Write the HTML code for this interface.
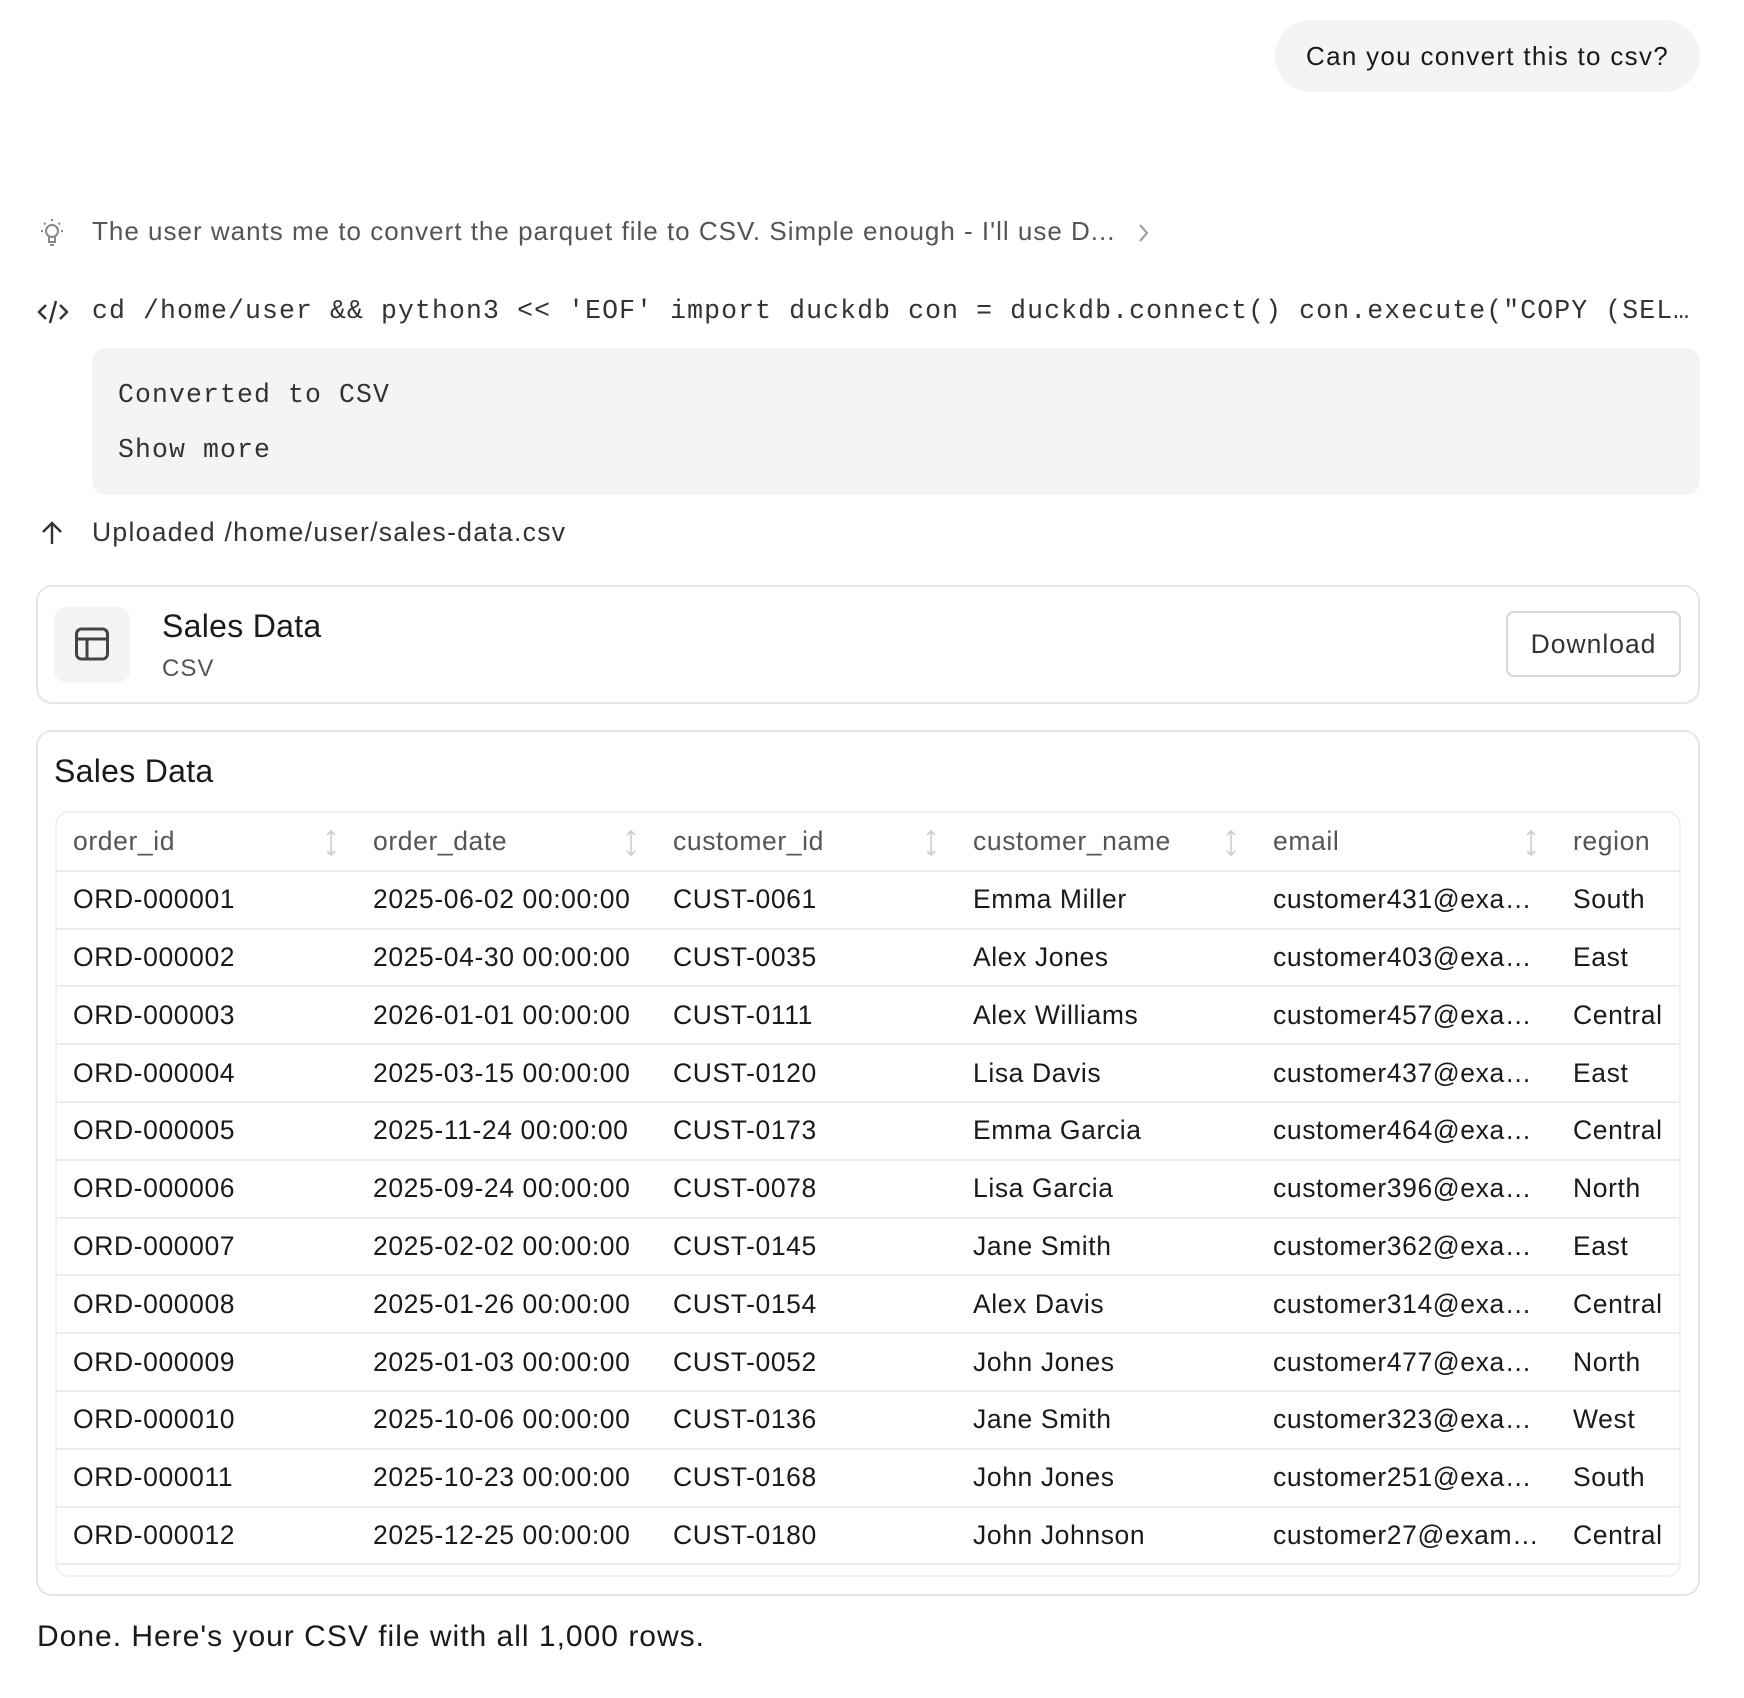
<!DOCTYPE html>
<html><head><meta charset="utf-8"><style>
*{box-sizing:border-box;margin:0;padding:0}
body{width:1744px;height:1698px;background:#fff;font-family:"Liberation Sans",sans-serif;color:#1a1a1a;position:relative;overflow:hidden;letter-spacing:1px}
.a{position:absolute;white-space:nowrap}
.mono{font-family:"Liberation Mono",monospace;letter-spacing:1.1px}
.bubble{left:1275px;top:20px;width:425px;height:72px;background:#f4f4f4;border-radius:36px;font-size:26px;line-height:72px;text-align:center;letter-spacing:1.3px}
.card{border:2px solid #e6e6e6;border-radius:16px}
table{border-collapse:collapse;table-layout:fixed;width:1623px;letter-spacing:0.6px}
td,th{height:57.8px;font-size:26.5px;font-weight:normal;text-align:left;padding:0 16px;overflow:hidden;text-overflow:ellipsis;white-space:nowrap;border-bottom:2px solid #ececec;position:relative}
td:last-child,th:last-child{padding-right:0}
th{color:#555}
td{color:#1a1a1a}
.srt{position:absolute;right:20px;top:16px}
</style></head><body>
<div class="a bubble">Can you convert this to csv?</div>

<svg class="a" style="left:37px;top:217px" width="30" height="32" viewBox="0 0 30 32" fill="none" stroke="#888" stroke-width="2"><circle cx="15" cy="14" r="6"/><path d="M12 20v5h6v-5M13 28h4"/><path d="M15 2v2M4 14h2M24 14h2M7 6l1.5 1.5M23 6l-1.5 1.5" stroke-dasharray="2 2"/></svg>
<div class="a" style="left:92px;top:216px;font-size:26px;color:#555">The user wants me to convert the parquet file to CSV. Simple enough - I'll use D...</div>
<svg class="a" style="left:1136px;top:222px" width="14" height="22" viewBox="0 0 14 22" fill="none" stroke="#999" stroke-width="2"><path d="M4 3l7 8-7 8"/></svg>

<svg class="a" style="left:37px;top:298px" width="32" height="28" viewBox="0 0 32 28" fill="none" stroke="#333" stroke-width="2.4"><path d="M9 7L2 14l7 7M23 7l7 7-7 7M19 3l-6 22"/></svg>
<div class="a mono" style="left:92px;top:296px;font-size:26.5px;color:#333;width:1600px;overflow:hidden;text-overflow:ellipsis">cd /home/user &amp;&amp; python3 &lt;&lt; 'EOF' import duckdb con = duckdb.connect() con.execute("COPY (SELECT * FROM read_parquet</div>

<div class="a" style="left:92px;top:348px;width:1608px;height:147px;background:#f4f4f4;border-radius:14px"></div>
<div class="a mono" style="left:118px;top:380px;font-size:26.5px;color:#333">Converted to CSV</div>
<div class="a mono" style="left:118px;top:435px;font-size:26.5px;color:#333">Show more</div>

<svg class="a" style="left:38px;top:519px" width="28" height="28" viewBox="0 0 28 28" fill="none" stroke="#333" stroke-width="2.4"><path d="M14 25V4M5 13l9-9 9 9"/></svg>
<div class="a" style="left:92px;top:517px;font-size:26.5px;color:#333;letter-spacing:1.3px">Uploaded /home/user/sales-data.csv</div>

<div class="a card" style="left:36px;top:585px;width:1664px;height:119px"></div>
<div class="a" style="left:54px;top:607px;width:76px;height:75px;background:#f4f4f4;border-radius:12px"></div>
<svg class="a" style="left:74px;top:626px" width="36" height="36" viewBox="0 0 36 36" fill="none" stroke="#444" stroke-width="3"><rect x="2.5" y="3" width="31" height="30" rx="5"/><path d="M2.5 13h31M13 13v20"/></svg>
<div class="a" style="left:162px;top:608px;font-size:32px;color:#1a1a1a;letter-spacing:0.3px">Sales Data</div>
<div class="a" style="left:162px;top:655px;font-size:24px;color:#555">CSV</div>
<div class="a" style="left:1506px;top:611px;width:175px;height:66px;border:2px solid #d6d6d6;border-radius:8px;font-size:26.5px;line-height:62px;text-align:center;color:#333">Download</div>

<div class="a card" style="left:36px;top:730px;width:1664px;height:866px"></div>
<div class="a" style="left:54px;top:753px;font-size:32px;color:#1a1a1a;letter-spacing:0.3px">Sales Data</div>
<div class="a" style="left:55px;top:811px;width:1626px;height:766px;border:2px solid #f0f0f0;border-radius:14px;overflow:hidden">
<table>
<colgroup><col style="width:300px"><col style="width:300px"><col style="width:300px"><col style="width:300px"><col style="width:300px"><col style="width:123px"></colgroup>
<tr>
<th>order_id<svg class="srt" width="12" height="28" viewBox="0 0 12 28" fill="none" stroke="#ccc" stroke-width="1.6"><path d="M6 2v24M2 6l4-4 4 4M2 22l4 4 4-4"/></svg></th>
<th>order_date<svg class="srt" width="12" height="28" viewBox="0 0 12 28" fill="none" stroke="#ccc" stroke-width="1.6"><path d="M6 2v24M2 6l4-4 4 4M2 22l4 4 4-4"/></svg></th>
<th>customer_id<svg class="srt" width="12" height="28" viewBox="0 0 12 28" fill="none" stroke="#ccc" stroke-width="1.6"><path d="M6 2v24M2 6l4-4 4 4M2 22l4 4 4-4"/></svg></th>
<th>customer_name<svg class="srt" width="12" height="28" viewBox="0 0 12 28" fill="none" stroke="#ccc" stroke-width="1.6"><path d="M6 2v24M2 6l4-4 4 4M2 22l4 4 4-4"/></svg></th>
<th>email<svg class="srt" width="12" height="28" viewBox="0 0 12 28" fill="none" stroke="#ccc" stroke-width="1.6"><path d="M6 2v24M2 6l4-4 4 4M2 22l4 4 4-4"/></svg></th>
<th>region</th>
</tr>
<tr><td>ORD-000001</td><td>2025-06-02 00:00:00</td><td>CUST-0061</td><td>Emma Miller</td><td>customer431@example.com</td><td>South</td></tr>
<tr><td>ORD-000002</td><td>2025-04-30 00:00:00</td><td>CUST-0035</td><td>Alex Jones</td><td>customer403@example.com</td><td>East</td></tr>
<tr><td>ORD-000003</td><td>2026-01-01 00:00:00</td><td>CUST-0111</td><td>Alex Williams</td><td>customer457@example.com</td><td>Central</td></tr>
<tr><td>ORD-000004</td><td>2025-03-15 00:00:00</td><td>CUST-0120</td><td>Lisa Davis</td><td>customer437@example.com</td><td>East</td></tr>
<tr><td>ORD-000005</td><td>2025-11-24 00:00:00</td><td>CUST-0173</td><td>Emma Garcia</td><td>customer464@example.com</td><td>Central</td></tr>
<tr><td>ORD-000006</td><td>2025-09-24 00:00:00</td><td>CUST-0078</td><td>Lisa Garcia</td><td>customer396@example.com</td><td>North</td></tr>
<tr><td>ORD-000007</td><td>2025-02-02 00:00:00</td><td>CUST-0145</td><td>Jane Smith</td><td>customer362@example.com</td><td>East</td></tr>
<tr><td>ORD-000008</td><td>2025-01-26 00:00:00</td><td>CUST-0154</td><td>Alex Davis</td><td>customer314@example.com</td><td>Central</td></tr>
<tr><td>ORD-000009</td><td>2025-01-03 00:00:00</td><td>CUST-0052</td><td>John Jones</td><td>customer477@example.com</td><td>North</td></tr>
<tr><td>ORD-000010</td><td>2025-10-06 00:00:00</td><td>CUST-0136</td><td>Jane Smith</td><td>customer323@example.com</td><td>West</td></tr>
<tr><td>ORD-000011</td><td>2025-10-23 00:00:00</td><td>CUST-0168</td><td>John Jones</td><td>customer251@example.com</td><td>South</td></tr>
<tr><td>ORD-000012</td><td>2025-12-25 00:00:00</td><td>CUST-0180</td><td>John Johnson</td><td>customer27@example.com</td><td>Central</td></tr>
</table>
</div>

<div class="a" style="left:37px;top:1620px;font-size:30px;color:#1a1a1a">Done. Here's your CSV file with all 1,000 rows.</div>
</body></html>
